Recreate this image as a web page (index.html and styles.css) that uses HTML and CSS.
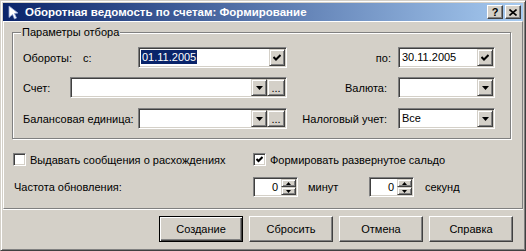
FILE: index.html
```html
<!DOCTYPE html>
<html lang="ru">
<head>
    <meta charset="UTF-8">
    <title>Оборотная ведомость по счетам: Формирование</title>
    <link rel="stylesheet" href="styles.css">
</head>
<body>
    <div class="window">
        <div class="titlebar">
            <svg class="app-icon" width="16" height="16" viewBox="0 0 16 16">
                <polygon points="3,2 12,9 8.5,9.5 10.5,14 8.5,15 6.5,10.5 3,13.5" fill="#fff" stroke="#8fa3d6" stroke-width="0.8"/>
            </svg>
            <span class="title">Оборотная ведомость по счетам: Формирование</span>
            <div class="title-buttons">
                <span class="tbtn">?</span>
                <span class="tbtn">
                    <svg width="8" height="7" viewBox="0 0 8 7"><path d="M0.5 0.5 L7.5 6.5 M7.5 0.5 L0.5 6.5" stroke="#000" stroke-width="1.6"/></svg>
                </span>
            </div>
        </div>

        <div class="panel">
            <fieldset class="group">
                <legend>Параметры отбора</legend>

                <div class="row">
                    <div class="left">
                        <span class="lbl lbl-period">Обороты:</span>
                        <span class="lbl grow">с:</span>
                        <div class="field w149">
                            <span class="value"><span class="sel">01.11.2005</span></span>
                            <span class="btn-in">
                                <svg width="8" height="7" viewBox="0 0 8 7"><polyline points="0.5,3 3,5.5 7.5,1" fill="none" stroke="#000" stroke-width="2"/></svg>
                            </span>
                        </div>
                    </div>
                    <div class="right">
                        <span class="lbl lbl-to">по:</span>
                        <div class="field w97">
                            <span class="value">30.11.2005</span>
                            <span class="btn-in">
                                <svg width="8" height="7" viewBox="0 0 8 7"><polyline points="0.5,3 3,5.5 7.5,1" fill="none" stroke="#000" stroke-width="2"/></svg>
                            </span>
                        </div>
                    </div>
                </div>

                <div class="row">
                    <div class="left">
                        <span class="lbl lbl-acc">Счет:</span>
                        <div class="field grow">
                            <span class="value"></span>
                            <span class="btn-in"><svg width="7" height="4" viewBox="0 0 7 4"><polygon points="0,0 7,0 3.5,4" fill="#000"/></svg></span>
                            <span class="btn-in dots">...</span>
                        </div>
                    </div>
                    <div class="right">
                        <span class="lbl">Валюта:</span>
                        <div class="field w97">
                            <span class="value"></span>
                            <span class="btn-in"><svg width="7" height="4" viewBox="0 0 7 4"><polygon points="0,0 7,0 3.5,4" fill="#000"/></svg></span>
                        </div>
                    </div>
                </div>

                <div class="row">
                    <div class="left">
                        <span class="lbl grow">Балансовая единица:</span>
                        <div class="field w149">
                            <span class="value"></span>
                            <span class="btn-in"><svg width="7" height="4" viewBox="0 0 7 4"><polygon points="0,0 7,0 3.5,4" fill="#000"/></svg></span>
                            <span class="btn-in dots">...</span>
                        </div>
                    </div>
                    <div class="right">
                        <span class="lbl">Налоговый учет:</span>
                        <div class="field w97">
                            <span class="value">Все</span>
                            <span class="btn-in"><svg width="7" height="4" viewBox="0 0 7 4"><polygon points="0,0 7,0 3.5,4" fill="#000"/></svg></span>
                        </div>
                    </div>
                </div>
            </fieldset>

            <div class="options">
                <label class="opt opt-first"><span class="cb"></span>Выдавать сообщения о расхождениях</label>
                <label class="opt">
                    <span class="cb">
                        <svg width="7" height="7" viewBox="0 0 7 7"><polyline points="0.5,3 2.5,5 6.5,1" fill="none" stroke="#000" stroke-width="2"/></svg>
                    </span>Формировать развернутое сальдо
                </label>
            </div>

            <div class="freq">
                <span class="lbl freq-label">Частота обновления:</span>
                <div class="spin">
                    <span class="value">0</span>
                    <div class="spin-btns">
                        <span class="sbtn"><svg width="5" height="3" viewBox="0 0 5 3"><polygon points="2.5,0 5,3 0,3" fill="#000"/></svg></span>
                        <span class="sbtn"><svg width="5" height="3" viewBox="0 0 5 3"><polygon points="0,0 5,0 2.5,3" fill="#000"/></svg></span>
                    </div>
                </div>
                <span class="unit unit-min">минут</span>
                <div class="spin">
                    <span class="value">0</span>
                    <div class="spin-btns">
                        <span class="sbtn"><svg width="5" height="3" viewBox="0 0 5 3"><polygon points="2.5,0 5,3 0,3" fill="#000"/></svg></span>
                        <span class="sbtn"><svg width="5" height="3" viewBox="0 0 5 3"><polygon points="0,0 5,0 2.5,3" fill="#000"/></svg></span>
                    </div>
                </div>
                <span class="unit">секунд</span>
            </div>
        </div>

        <div class="actions">
            <button class="btn default">Создание</button>
            <button class="btn">Сбросить</button>
            <button class="btn">Отмена</button>
            <button class="btn">Справка</button>
        </div>
    </div>
</body>
</html>
```

FILE: styles.css
```css
* {
    box-sizing: border-box;
}

body {
    margin: 0;
    font-family: 'Liberation Sans', Arial, sans-serif;
    font-size: 11px;
    color: #000;
    background: #d4d0c8;
}

.window {
    width: 526px;
    height: 251px;
    padding: 2px;
    background: #d4d0c8;
    border: 1px solid;
    border-color: #d4d0c8 #404040 #404040 #d4d0c8;
    box-shadow: inset 1px 1px #fff, inset -1px -1px #808080;
}

/* barre de titre */
.titlebar {
    height: 18px;
    display: flex;
    align-items: center;
    padding-left: 3px;
    background: linear-gradient(to right, #0a246a, #a6caf0);
}

.app-icon {
    margin-right: 3px;
}

.title {
    color: #fff;
    font-weight: bold;
    font-size: 11.5px;
    white-space: nowrap;
}

.title-buttons {
    margin-left: auto;
    display: flex;
    gap: 2px;
    padding-right: 2px;
}

.tbtn {
    width: 16px;
    height: 14px;
    display: flex;
    align-items: center;
    justify-content: center;
    font-weight: bold;
    font-size: 11px;
    background: #d4d0c8;
    border: 1px solid;
    border-color: #fff #404040 #404040 #fff;
    box-shadow: inset -1px -1px #808080;
}

/* panneau principal */
.panel {
    border: 1px solid;
    border-color: #fff #808080 #808080 #fff;
    box-shadow: 0 1px #fff;
    padding: 4px 0 11px 8px;
}

.group {
    width: 499px;
    margin: 0;
    padding: 8px 15px 9px 10px;
    border: 1px solid #808080;
    box-shadow: inset 1px 1px #fff, 1px 1px #fff;
}

.group legend {
    padding: 0 1px;
    margin-left: -2px;
    line-height: 13px;
    background: #d4d0c8;
}

.row {
    display: flex;
    align-items: center;
    height: 21px;
    margin-bottom: 9px;
}

.row + .row {
    margin-bottom: 10px;
}

.row:last-of-type {
    margin-bottom: 0;
}

.left {
    width: 264px;
    flex-shrink: 0;
    display: flex;
    align-items: center;
}

.right {
    flex: 1;
    display: flex;
    align-items: center;
    justify-content: flex-end;
}

.lbl {
    white-space: nowrap;
    flex-shrink: 0;
}

.grow {
    flex: 1;
}

.lbl-period {
    width: 60px;
}

.lbl-acc {
    width: 47px;
}

.right .lbl {
    margin-right: 11px;
}

.right .lbl-to {
    margin-right: 7px;
}

/* champs */
.field {
    display: flex;
    flex-shrink: 0;
    height: 21px;
    padding: 1px;
    background: #fff;
    border: 1px solid;
    border-color: #808080 #fff #fff #808080;
    box-shadow: inset 1px 1px #404040, inset -1px -1px #d4d0c8;
}

.w149 {
    width: 149px;
}

.w97 {
    width: 97px;
}

.value {
    flex: 1;
    padding-left: 2px;
    line-height: 17px;
    white-space: nowrap;
    overflow: hidden;
}

.sel {
    background: #0a246a;
    color: #fff;
    padding: 1px 1px;
    margin-left: -1px;
}

.btn-in {
    width: 16px;
    height: 17px;
    display: flex;
    align-items: center;
    justify-content: center;
    background: #d4d0c8;
    border: 1px solid;
    border-color: #d4d0c8 #404040 #404040 #d4d0c8;
    box-shadow: inset 1px 1px #fff, inset -1px -1px #808080;
}

.btn-in.dots {
    width: 18px;
    align-items: flex-end;
    padding-bottom: 3px;
    font-size: 11px;
    line-height: 8px;
}

/* cases à cocher */
.options {
    display: flex;
    align-items: center;
    height: 13px;
    margin-top: 14px;
    padding-left: 1px;
}

.opt {
    display: flex;
    align-items: center;
    gap: 4px;
    white-space: nowrap;
}

.opt-first {
    width: 240px;
}

.cb {
    width: 13px;
    height: 13px;
    display: flex;
    align-items: center;
    justify-content: center;
    background: #fff;
    border: 1px solid;
    border-color: #808080 #fff #fff #808080;
    box-shadow: inset 1px 1px #404040, inset -1px -1px #d4d0c8;
}

/* fréquence */
.freq {
    display: flex;
    align-items: center;
    height: 20px;
    margin-top: 11px;
    padding-left: 2px;
}

.freq-label {
    width: 239px;
}

.spin {
    width: 45px;
    height: 20px;
    display: flex;
    padding: 1px;
    background: #fff;
    border: 1px solid;
    border-color: #808080 #fff #fff #808080;
    box-shadow: inset 1px 1px #404040, inset -1px -1px #d4d0c8;
}

.spin .value {
    text-align: right;
    padding-right: 3px;
    line-height: 16px;
}

.spin-btns {
    width: 15px;
    display: flex;
    flex-direction: column;
}

.sbtn {
    height: 8px;
    display: flex;
    align-items: center;
    justify-content: center;
    background: #d4d0c8;
    border: 1px solid;
    border-color: #d4d0c8 #404040 #404040 #d4d0c8;
    box-shadow: inset 1px 1px #fff, inset -1px -1px #808080;
}

.unit {
    padding-left: 11px;
}

.unit-min {
    width: 71px;
    padding-left: 10px;
}

/* boutons */
.actions {
    display: flex;
    justify-content: flex-end;
    gap: 6px;
    padding: 7px 10px 0 0;
}

.btn {
    width: 84px;
    height: 26px;
    padding: 0;
    font: inherit;
    color: #000;
    background: #d4d0c8;
    border: 1px solid;
    border-color: #fff #404040 #404040 #fff;
    box-shadow: inset -1px -1px #808080;
}

.btn.default {
    border-color: #000;
    box-shadow: inset 1px 1px #fff, inset -1px -1px #404040, inset -2px -2px #808080;
}
```
